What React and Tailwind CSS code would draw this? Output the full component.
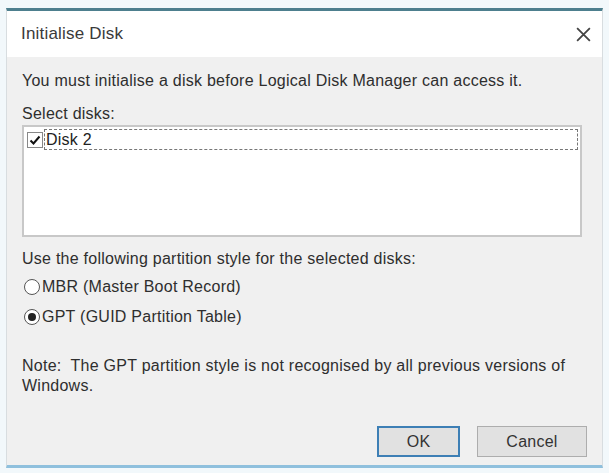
import React from "react";

export default function App() {
  const font = { fontFamily: '"Liberation Sans", Arial, sans-serif' };
  return (
    <div className="w-[609px] h-[473px] bg-[#f2f8fb] pt-[8px] px-[6px] overflow-hidden" style={font}>
      <div className="border-t-[3px] border-[#4d7f8e] border-x border-x-[#d8dde0] border-b-[3px] border-b-[#8fc0dd] bg-[#f0f0f0] flex flex-col h-[460px]">
        <div className="bg-white h-[46px] flex items-center justify-between pl-[14px] pr-[10px]">
          <span className="text-[17px] text-[#3a3a3a] tracking-[0.2px]">Initialise Disk</span>
          <svg width="17" height="17" viewBox="0 0 16 16">
            <path d="M2 2 L14 14 M14 2 L2 14" stroke="#444" strokeWidth="1.7" />
          </svg>
        </div>
        <div className="flex flex-col pl-[15px] pr-[20px] text-[16px] text-[#2e2e2e] tracking-[0.25px]">
          <div className="mt-[14px] leading-[19px]">You must initialise a disk before Logical Disk Manager can access it.</div>
          <div className="mt-[14px] leading-[19px]">Select disks:</div>
          <div className="mt-[2px] h-[112px] border-2 border-[#c8c8c8] bg-white p-[2px]">
            <div className="flex items-center h-[21px]">
              <div className="w-[16px] h-[16px] ml-[1px] border border-[#888] bg-white flex items-center justify-center">
                <svg width="12" height="12" viewBox="0 0 12 12">
                  <path d="M1.5 6.5 L4.5 9.5 L10.5 2.5" fill="none" stroke="#111" strokeWidth="2" />
                </svg>
              </div>
              <div className="flex-1 h-[21px] ml-[1px] border border-dashed border-[#777] flex items-center pl-[1px]">
                <span className="text-[#222]">Disk 2</span>
              </div>
            </div>
          </div>
          <div className="mt-[12px] leading-[19px]">Use the following partition style for the selected disks:</div>
          <div className="mt-[9px] flex items-center h-[20px]">
            <div className="w-[16px] h-[16px] rounded-full border border-[#555] bg-white ml-[2px] mr-[2px]" />
            <span>MBR (Master Boot Record)</span>
          </div>
          <div className="mt-[10px] flex items-center h-[20px]">
            <div className="w-[16px] h-[16px] rounded-full border border-[#555] bg-white ml-[2px] mr-[2px] flex items-center justify-center">
              <div className="w-[8px] h-[8px] rounded-full bg-[#222]" />
            </div>
            <span>GPT (GUID Partition Table)</span>
          </div>
          <div className="mt-[29px] leading-[20px]">
            Note:&nbsp; The GPT partition style is not recognised by all previous versions of Windows.
          </div>
          <div className="mt-[30px] flex justify-end gap-[17px]">
            <button className="w-[83px] h-[31px] border-2 border-[#3d7fb5] bg-[#e1e1e1] text-[16px] text-[#333]">OK</button>
            <button className="w-[110px] h-[31px] border border-[#adadad] bg-[#e1e1e1] text-[16px] text-[#333] -mr-[5px]">Cancel</button>
          </div>
        </div>
      </div>
    </div>
  );
}
